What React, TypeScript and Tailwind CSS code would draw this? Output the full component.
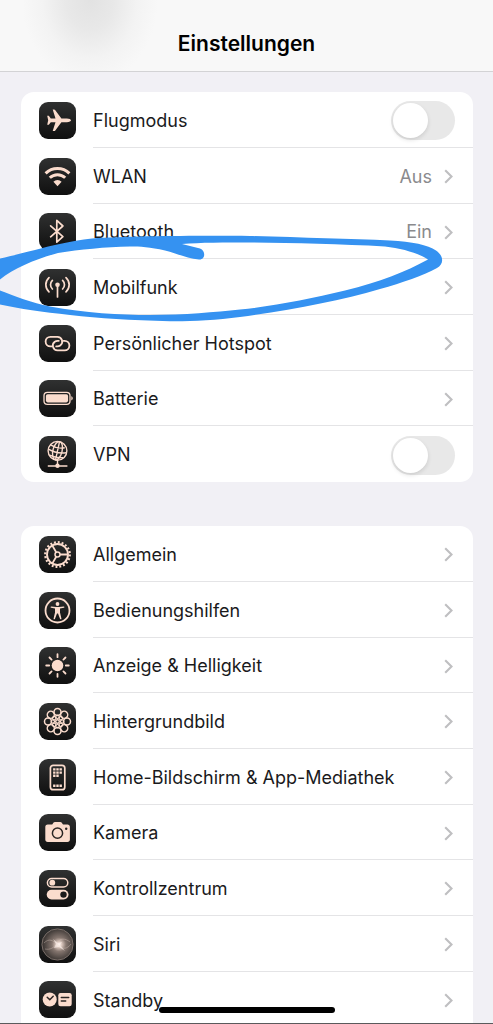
import type { ReactNode } from "react";
import { clsx } from "clsx";

const PEACH = "#fbdccd";

/* ---------- Glyphs, all on a 37x37 tile ---------- */

const airplane = (
  <path
    fill={PEACH}
    d="M32 18.3c0 1.1-1.6 1.9-4.2 1.9h-5.4l-6.1 8.2c-.3.4-.7.6-1.2.6h-1.4l2.8-8.8h-4.7l-2 2.6H8.2l1-4.5-1-4.5h1.6l2 2.6h4.7l-2.8-8.8h1.4c.5 0 .9.2 1.2.6l6.1 8.2h5.4c2.6 0 4.2.8 4.2 1.9z"
  />
);

const wifi = (
  <>
    <g fill="none" stroke={PEACH} strokeWidth="3">
      <path d="M6.6 15.4A17 17 0 0 1 30.400 15.4" />
      <path d="M10.8 19.8A11 11 0 0 1 26.2 19.8" />
    </g>
    <path fill={PEACH} d="M18.5 28.2l-4.1-4.500a5.8 5.8 0 0 1 8.200 0z" />
  </>
);

const bluetooth = (
  <path
    fill="none"
    stroke={PEACH}
    strokeWidth="1.7"
    strokeLinejoin="round"
    strokeLinecap="round"
    d="M11.6 12.800l12.300 10.800-6.100 5.600V7.400l6.100 5.600-12.300 10.800"
  />
);

const antenna = (
  <>
    <g fill="none" stroke={PEACH} strokeWidth="1.700" strokeLinecap="round">
      <path d="M10 8.600c-4.200 3.900-4.200 10.300 0 14.200M27 8.600c4.200 3.900 4.200 10.300 0 14.200" />
      <path d="M13.400 11.400c-2.500 2.400-2.500 6.200 0 8.600M23.600 11.400c2.500 2.400 2.500 6.200 0 8.600" />
      <path d="M18.500 16v12" />
    </g>
    <circle cx="18.5" cy="15.700" r="2.300" fill={PEACH} />
  </>
);

const hotspot = (
  <g fill="none" stroke={PEACH} strokeWidth="1.8" strokeLinecap="round">
    <path d="M12.4 21.400H11.400a4.800 4.800 0 0 1 0-9.600h7a4.800 4.800 0 0 1 2.800 8.700c-.8.600-1.800.9-2.800.9h-1.200" />
    <path d="M24.6 15.800h1a4.800 4.800 0 0 1 0 9.600h-7a4.800 4.800 0 0 1-2.800-8.700c.8-.6 1.800-.9 2.800-.9h1.200" />
  </g>
);

const battery = (
  <>
    <rect x="5" y="12.3" width="26" height="12" rx="3.4" fill="none" stroke={PEACH} strokeWidth="1.3" />
    <rect x="6.9" y="14.2" width="22.2" height="8.2" rx="1.8" fill={PEACH} />
    <path fill={PEACH} d="M32.3 16.2c1.9.6 1.9 3.6 0 4.2z" />
  </>
);

const vpn = (
  <>
    <g fill="none" stroke={PEACH} strokeWidth="1.4">
      <circle cx="18.5" cy="14.8" r="9.4" />
      <ellipse cx="18.5" cy="14.8" rx="4.6" ry="9.4" transform="rotate(14 18.5 14.8)" />
      <path d="M20.5 5.8l-4 18M9.4 13.2c5 3 12 4.3 18 3.5M11.5 8.8c4 2.6 9.5 3.8 14.2 3M10.6 19.2c4 2 9 2.9 13.6 2.4" />
      <path d="M18.5 24.2v4M8.8 30h19.6" />
    </g>
    <circle cx="18.5" cy="29.8" r="2.2" fill={PEACH} />
  </>
);

const gear = (
  <g fill="none" stroke={PEACH}>
    <circle cx="18.5" cy="18.5" r="12.3" strokeWidth="2.2" strokeDasharray="1.93 1.93" />
    <circle cx="18.5" cy="18.5" r="10.5" strokeWidth="1.9" />
    <circle cx="18.5" cy="18.5" r="2.5" strokeWidth="1.5" />
    <path strokeWidth="1.8" d="M21 18.5h8M17.2 16.3l-4-6.9M17.2 20.7l-4 6.9" />
  </g>
);

const accessibility = (
  <>
    <circle cx="18.5" cy="18.5" r="12" fill="none" stroke={PEACH} strokeWidth="1.8" />
    <circle cx="18.5" cy="12" r="1.9" fill={PEACH} />
    <path
      fill={PEACH}
      d="M12.2 14.4l4.8.5h3l4.8-.5c.8 0 .9 1.200.1 1.300l-3.900.9v4l1.400 5.900c.2.900-1 1.200-1.300.4l-2.100-5.300h-1l-2.100 5.300c-.3.800-1.500.5-1.300-.4l1.400-5.900v-4l-3.900-.9c-.8-.1-.7-1.300.1-1.300z"
    />
  </>
);

const brightness = (
  <>
    <circle cx="18.5" cy="18.5" r="5.8" fill={PEACH} />
    <path
      stroke={PEACH}
      strokeWidth="1.8"
      strokeLinecap="round"
      d="M18.5 7.2v3M18.5 26.8v3M7.2 18.5h3M26.8 18.5h3M10.5 10.5l2.1 2.1M24.4 24.4l2.1 2.1M10.5 26.5l2.1-2.1M24.4 12.6l2.1-2.1"
    />
  </>
);

const PETALS = [0, 45, 90, 135, 180, 225, 270, 315];

const wallpaper = (
  <g fill="none" stroke={PEACH}>
    {PETALS.map((angle) => (
      <g key={angle} transform={`rotate(${angle} 18.5 18.5)`}>
        <circle cx="18.5" cy="9" r="3.500" strokeWidth="1.500" />
        <circle cx="18.5" cy="13.800" r="1.700" strokeWidth="1.200" />
      </g>
    ))}
    <circle cx="18.5" cy="18.5" r="1.800" strokeWidth="1.400" />
  </g>
);

const homeScreen = (
  <>
    <rect x="11.4" y="6.3" width="14.4" height="24.4" rx="2.8" fill="none" stroke={PEACH} strokeWidth="1.7" />
    <path
      stroke={PEACH}
      strokeWidth="2.4"
      strokeDasharray="2.4 .8"
      d="M14.1 10.4h8.8M14.1 13.6h8.8M14.1 16.8h5.6M14.1 26.8h8.8"
    />
  </>
);

const camera = (
  <>
    <path
      fill={PEACH}
      d="M8.800 10.500h4.400l1.400-1.900c.3-.4.7-.6 1.300-.6h5.400c.6 0 1 .2 1.300.6l1.400 1.900h4.400c1.600 0 2.500.9 2.500 2.500v12.500c0 1.600-.9 2.500-2.500 2.500H8.800c-1.600 0-2.500-.9-2.500-2.500V13c0-1.600.9-2.500 2.500-2.500z"
    />
    <circle cx="18.5" cy="19.2" r="5.1" fill="none" stroke="#2a2523" strokeWidth="1.5" />
    <circle cx="27.2" cy="14.8" r="1.2" fill="#2a2523" />
  </>
);

const controlCenter = (
  <>
    <rect x="8.4" y="8.4" width="20.4" height="8.6" rx="4.3" fill="none" stroke={PEACH} strokeWidth="1.5" />
    <circle cx="13.3" cy="12.7" r="2.9" fill={PEACH} />
    <rect x="7.7" y="19.7" width="21.8" height="9.8" rx="4.9" fill={PEACH} />
    <circle cx="24.5" cy="24.6" r="3.2" fill="#1c1b1b" />
  </>
);

const siri = (
  <>
    <defs>
      <radialGradient id="siri-orb" cx="55%" cy="50%" r="50%">
        <stop offset="0" stopColor="#fff4ee" />
        <stop offset=".16" stopColor="#e0cdc3" />
        <stop offset=".45" stopColor="#85766f" />
        <stop offset="1" stopColor="#403a37" />
      </radialGradient>
    </defs>
    <circle cx="18.5" cy="18.5" r="15.6" fill="url(#siri-orb)" stroke="#8b7d77" strokeWidth=".8" />
    <g fill="none" stroke="#d9c5bb" strokeWidth=".8" opacity=".5">
      <path d="M5 17c5-5 9-3 14 2s9 4 13-1" />
      <path d="M6 23c5 1 9-1 12-6s8-5 13-1" />
    </g>
    <path fill="#fff4ee" d="M14 13l5 4 4-1-2 3 5 6-6-4-5 1 2-4z" opacity=".6" />
  </>
);

const standby = (
  <>
    <circle cx="10.7" cy="18.5" r="7" fill={PEACH} />
    <rect x="19.3" y="12" width="13.4" height="13.2" rx="2.2" fill={PEACH} />
    <path
      fill="none"
      stroke="#2a2523"
      strokeWidth="1.5"
      strokeLinecap="round"
      d="M8.2 16.3l2.6 2.5 3.4-3.6M22.3 16.4h7.4M22.3 20h4.4"
    />
  </>
);

/* ---------- Data ---------- */

type Item = {
  id: string;
  label: string;
  glyph: ReactNode;
  value?: string;
  toggle?: boolean;
};

const connectivity: Item[] = [
  { id: "flugmodus", label: "Flugmodus", glyph: airplane, toggle: true },
  { id: "wlan", label: "WLAN", glyph: wifi, value: "Aus" },
  { id: "bluetooth", label: "Bluetooth", glyph: bluetooth, value: "Ein" },
  { id: "mobilfunk", label: "Mobilfunk", glyph: antenna },
  { id: "hotspot", label: "Persönlicher Hotspot", glyph: hotspot },
  { id: "batterie", label: "Batterie", glyph: battery },
  { id: "vpn", label: "VPN", glyph: vpn, toggle: true },
];

const general: Item[] = [
  { id: "allgemein", label: "Allgemein", glyph: gear },
  { id: "bedienungshilfen", label: "Bedienungshilfen", glyph: accessibility },
  { id: "anzeige", label: "Anzeige & Helligkeit", glyph: brightness },
  { id: "hintergrundbild", label: "Hintergrundbild", glyph: wallpaper },
  { id: "home", label: "Home-Bildschirm & App-Mediathek", glyph: homeScreen },
  { id: "kamera", label: "Kamera", glyph: camera },
  { id: "kontrollzentrum", label: "Kontrollzentrum", glyph: controlCenter },
  { id: "siri", label: "Siri", glyph: siri },
  { id: "standby", label: "Standby", glyph: standby },
];

/* ---------- Components ---------- */

function Tile({ children }: { children: ReactNode }) {
  return (
    <span className="size-[37px] shrink-0 overflow-hidden rounded-[9px] bg-linear-to-b from-[#303131] to-[#101010]">
      <svg viewBox="0 0 37 37" className="size-full" aria-hidden="true">
        {children}
      </svg>
    </span>
  );
}

function Chevron() {
  return (
    <svg viewBox="0 0 9 15" className="h-[15px] w-[9px] shrink-0" aria-hidden="true">
      <path d="M1.2 1.2l6.300 6.300-6.300 6.300" fill="none" stroke="#bfbfc1" strokeWidth="2.1" />
    </svg>
  );
}

function Row({ item }: { item: Item }) {
  const inner =
    "flex h-full min-w-0 flex-1 items-center border-b border-[#e4e4e6] pt-0.5 group-last:border-b-0";

  if (item.toggle) {
    return (
      <li className="group h-14 nth-[3n]:h-[55px]">
        <label htmlFor={item.id} className="flex h-full items-center gap-[17px] pl-[18px]">
          <Tile>{item.glyph}</Tile>
          <span className={clsx(inner, "pr-[18px]")}>
            <span className="flex-1">{item.label}</span>
            <input
              id={item.id}
              type="checkbox"
              role="switch"
              className="flex h-[39px] w-16 appearance-none items-center rounded-full bg-[#e8e8e8] px-0.5 before:size-[35px] before:rounded-full before:bg-white before:shadow-[0_2px_4px_rgba(0,0,0,0.12)] checked:justify-end checked:bg-green-500"
            />
          </span>
        </label>
      </li>
    );
  }

  return (
    <li className="group h-14 nth-[3n]:h-[55px]">
      <a href={`#${item.id}`} className="flex h-full items-center gap-[17px] pl-[18px]">
        <Tile>{item.glyph}</Tile>
        <span className={clsx(inner, "gap-3 pr-5")}>
          <span className="flex-1 whitespace-nowrap">{item.label}</span>
          {item.value && <span className="text-[#8a8a8d]">{item.value}</span>}
          <Chevron />
        </span>
      </a>
    </li>
  );
}

function Group({ items, className }: { items: Item[]; className?: string }) {
  return (
    <ul className={clsx("rounded-[13px] bg-white", className)}>
      {items.map((item) => (
        <Row key={item.id} item={item} />
      ))}
    </ul>
  );
}

/* Hand-drawn loop around the "Mobilfunk" row */
function MarkerLoop() {
  return (
    <svg
      viewBox="0 0 450 100"
      className="pointer-events-none absolute top-[230px] left-0 h-[100px] w-[450px]"
      aria-hidden="true"
    >
      <path
        fill="#3592f1"
        d="M0 28.5C12 26 22 23 35 20C50 16 70 11 92 8.5C130 6 200 5.5 250 6C300 7.5 350 9 390 10.5C412 11.5 428 15 436 20.5C444 26 444 34 437 38C424 45 402 53 380 59C340 71 290 80 240 87C215 90.5 190 91.5 170 91.3C130 90 100 88.5 70 85C42 82 20 79 0 74.5V60.5C14 66 32 73 50 76.5C85 83 120 85 150 85C185 85 215 82 240 79.5C275 76 310 69 345 60.5C380 52 405 42 428 29.5C418 23 402 18.5 385 16.5C340 14 290 13 250 12.5C225 12.5 200 12.5 182 14L200 18.5C206 20.5 205.5 30 199 29.5C188 28.5 178 24 165 20.5C150 17 140 16.5 130 16.5C105 17 80 19.5 58 23C36 29 14 38 0 49.5z"
      />
    </svg>
  );
}

export default function App() {
  return (
    <div className="relative h-screen overflow-hidden bg-[#f1f0f5] font-['Inter','Liberation_Sans',sans-serif] text-lg leading-6 text-[#1a1a1c]">
      <header className="flex h-[72px] items-end justify-center border-b border-[#d3d3d5] bg-[#f8f8f8] bg-[radial-gradient(ellipse_68px_84px_at_90px_0px,#e2e2e2,#e8e8e8_35%,#f3f3f3_70%,#f8f8f8)] pb-[15px]">
        <h1 className="text-[21px] leading-6 font-semibold text-black">Einstellungen</h1>
      </header>

      <main className="flex flex-col gap-11 pt-5 pr-5 pl-[21px]">
        <Group items={connectivity} />
        <Group items={general} className="pb-5" />
      </main>

      <MarkerLoop />

      {/* Home indicator */}
      <div className="absolute inset-x-0 bottom-0 flex justify-center border-b border-[#5a5a5c] pb-2.5">
        <div className="h-1.5 w-44 rounded-full bg-black" />
      </div>
    </div>
  );
}
